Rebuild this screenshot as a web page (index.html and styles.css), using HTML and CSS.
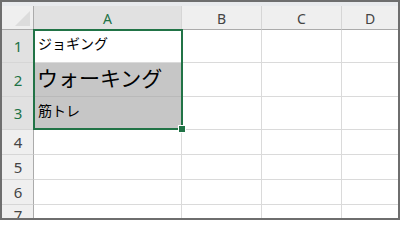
FILE: index.html
```html
<!DOCTYPE html>
<html lang="ja">
<head>
<meta charset="utf-8">
<link rel="stylesheet" href="styles.css">
</head>
<body>
<div class="sheet">
  <div class="topstrip"></div>
  <div class="grid">
    <div class="corner"><div class="tri"></div></div>
    <div class="colhead sel">A</div>
    <div class="colhead">B</div>
    <div class="colhead">C</div>
    <div class="colhead last">D</div>

    <div class="rowhead sel">1</div>
    <div class="cell jp">ジョギング</div>
    <div class="cell"></div><div class="cell"></div><div class="cell last"></div>

    <div class="rowhead sel">2</div>
    <div class="cell jp big fill">ウォーキング</div>
    <div class="cell"></div><div class="cell"></div><div class="cell last"></div>

    <div class="rowhead sel">3</div>
    <div class="cell jp fill">筋トレ</div>
    <div class="cell"></div><div class="cell"></div><div class="cell last"></div>

    <div class="rowhead">4</div>
    <div class="cell"></div><div class="cell"></div><div class="cell"></div><div class="cell last"></div>

    <div class="rowhead">5</div>
    <div class="cell"></div><div class="cell"></div><div class="cell"></div><div class="cell last"></div>

    <div class="rowhead">6</div>
    <div class="cell"></div><div class="cell"></div><div class="cell"></div><div class="cell last"></div>

    <div class="rowhead">7</div>
    <div class="cell"></div><div class="cell"></div><div class="cell"></div><div class="cell last"></div>
  </div>
  <div class="selection"><div class="handle"></div></div>
</div>
</body>
</html>
```
FILE: styles.css
```css
html, body {
  margin: 0;
  padding: 0;
  background: #ffffff;
}
.sheet {
  position: relative;
  width: 400px;
  height: 220px;
  box-sizing: border-box;
  border: 2px solid #6e6e6e;
  overflow: hidden;
  background: #ffffff;
}
.topstrip {
  height: 4px;
  background: #e8eaed;
}
.grid {
  display: grid;
  grid-template-columns: 32px 148px 80px 80px 1fr;
  grid-template-rows: 24px 33px 34px 33px 25px 25px 25px 1fr;
  height: 214px;
}
.grid > div {
  box-sizing: border-box;
}
.corner {
  position: relative;
  background: #efefef;
  border-right: 1px solid #ababab;
  border-bottom: 1px solid #ababab;
}
.tri {
  position: absolute;
  right: 3px;
  bottom: 3px;
  width: 0;
  height: 0;
  border-left: 15px solid transparent;
  border-bottom: 15px solid #dcdcdc;
}
.colhead {
  background: #efefef;
  border-right: 1px solid #d6d6d6;
  border-bottom: 1px solid #ababab;
  display: flex;
  align-items: center;
  justify-content: center;
  font-family: "Noto Sans", "Open Sans", sans-serif;
  font-size: 14px;
  color: #444444;
  padding-top: 1px;
}
.colhead.last, .cell.last {
  border-right: none;
}
.colhead.sel {
  background: #e1e1e1;
  color: #217346;
}
.rowhead {
  background: #efefef;
  border-right: 1px solid #ababab;
  border-bottom: 1px solid #d6d6d6;
  display: flex;
  align-items: center;
  justify-content: center;
  font-family: "Noto Sans", "Open Sans", sans-serif;
  font-size: 15px;
  color: #444444;
  padding-left: 1px;
}
.rowhead.sel {
  background: #e1e1e1;
  color: #217346;
}
.cell {
  border-right: 1px solid #dadada;
  border-bottom: 1px solid #dadada;
  background: #ffffff;
}
.cell.fill {
  background: #c6c6c6;
  border-bottom-color: #b9b9b9;
}
.jp {
  font-family: "Noto Sans CJK JP", sans-serif;
  font-size: 14px;
  color: #000000;
  display: flex;
  align-items: center;
  padding-left: 4px;
  padding-bottom: 6px;
  white-space: nowrap;
}
.jp.big {
  font-size: 21px;
  padding-left: 3px;
  padding-bottom: 5px;
}
.selection {
  position: absolute;
  left: 31px;
  top: 27px;
  width: 150px;
  height: 101px;
  box-sizing: border-box;
  border: 2px solid #217346;
}
.handle {
  position: absolute;
  right: -5px;
  bottom: -5px;
  width: 6px;
  height: 6px;
  background: #217346;
  border: 1px solid #ffffff;
}
```
